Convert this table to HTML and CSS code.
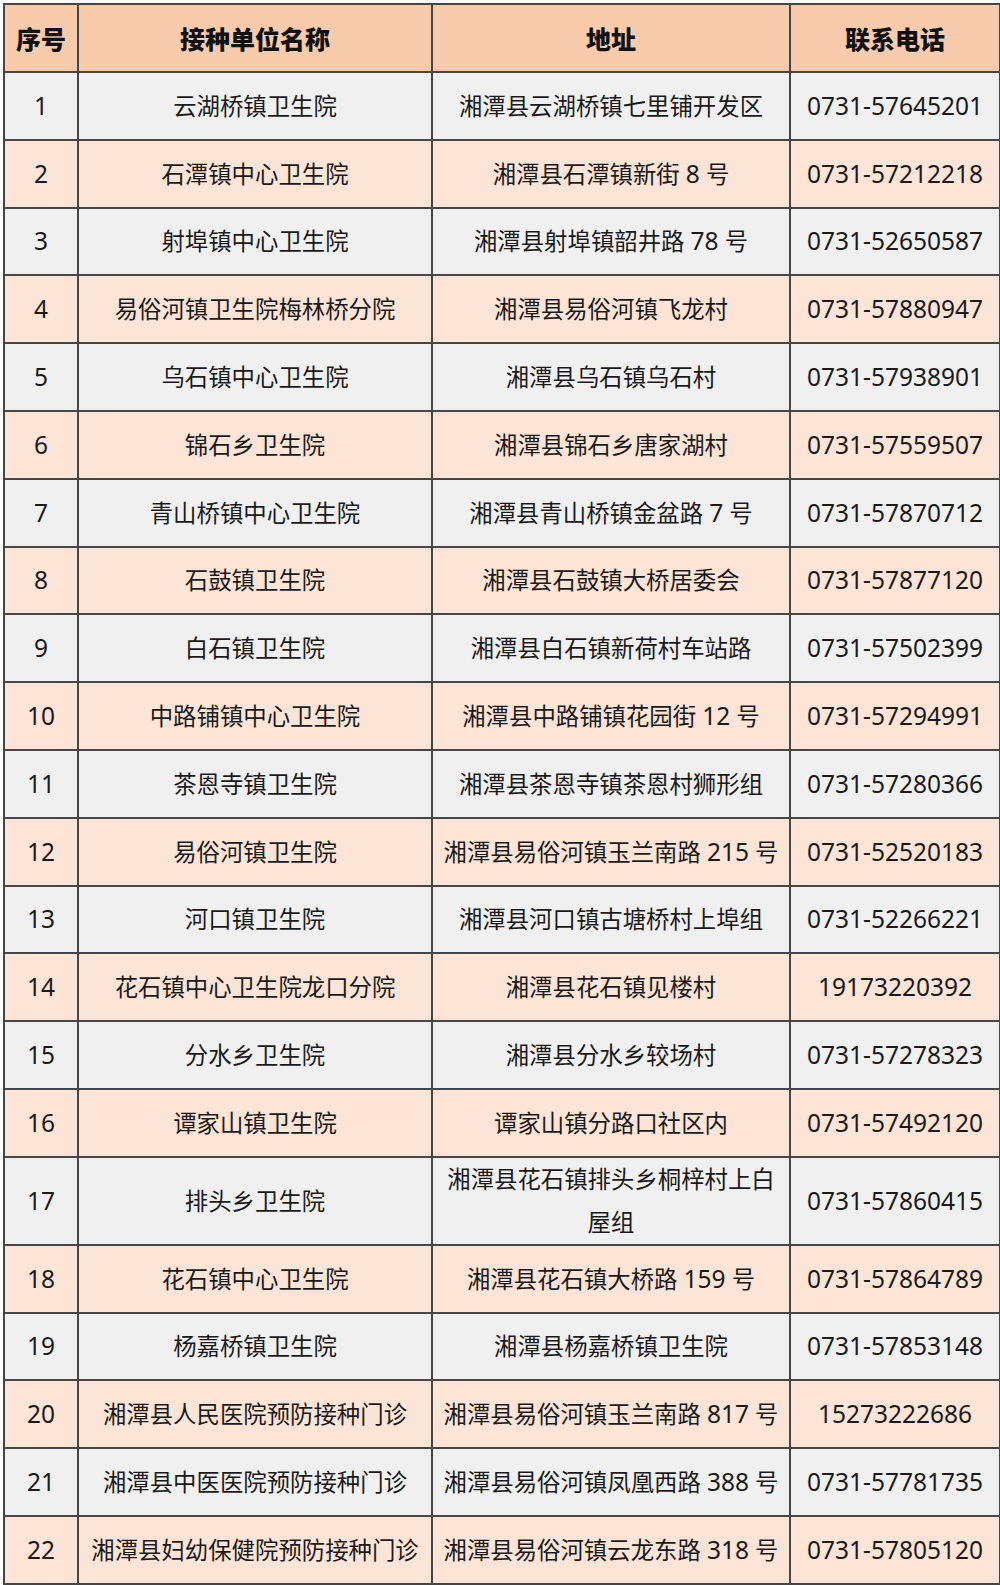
FILE: index.html
```html
<!DOCTYPE html>
<html lang="zh-CN">
<head>
<meta charset="utf-8">
<title>接种单位</title>
<link rel="stylesheet" href="styles.css">
</head>
<body>
<table class="sites">
  <colgroup>
    <col class="c-no">
    <col class="c-name">
    <col class="c-addr">
    <col class="c-tel">
  </colgroup>
  <thead>
    <tr><th>序号</th><th>接种单位名称</th><th>地址</th><th>联系电话</th></tr>
  </thead>
  <tbody>
    <tr><td class="num">1</td><td>云湖桥镇卫生院</td><td>湘潭县云湖桥镇七里铺开发区</td><td class="num">0731-57645201</td></tr>
    <tr><td class="num">2</td><td>石潭镇中心卫生院</td><td>湘潭县石潭镇新街 <span class="n">8</span> 号</td><td class="num">0731-57212218</td></tr>
    <tr><td class="num">3</td><td>射埠镇中心卫生院</td><td>湘潭县射埠镇韶井路 <span class="n">78</span> 号</td><td class="num">0731-52650587</td></tr>
    <tr><td class="num">4</td><td>易俗河镇卫生院梅林桥分院</td><td>湘潭县易俗河镇飞龙村</td><td class="num">0731-57880947</td></tr>
    <tr><td class="num">5</td><td>乌石镇中心卫生院</td><td>湘潭县乌石镇乌石村</td><td class="num">0731-57938901</td></tr>
    <tr><td class="num">6</td><td>锦石乡卫生院</td><td>湘潭县锦石乡唐家湖村</td><td class="num">0731-57559507</td></tr>
    <tr><td class="num">7</td><td>青山桥镇中心卫生院</td><td>湘潭县青山桥镇金盆路 <span class="n">7</span> 号</td><td class="num">0731-57870712</td></tr>
    <tr><td class="num">8</td><td>石鼓镇卫生院</td><td>湘潭县石鼓镇大桥居委会</td><td class="num">0731-57877120</td></tr>
    <tr><td class="num">9</td><td>白石镇卫生院</td><td>湘潭县白石镇新荷村车站路</td><td class="num">0731-57502399</td></tr>
    <tr><td class="num">10</td><td>中路铺镇中心卫生院</td><td>湘潭县中路铺镇花园街 <span class="n">12</span> 号</td><td class="num">0731-57294991</td></tr>
    <tr><td class="num">11</td><td>茶恩寺镇卫生院</td><td>湘潭县茶恩寺镇茶恩村狮形组</td><td class="num">0731-57280366</td></tr>
    <tr><td class="num">12</td><td>易俗河镇卫生院</td><td>湘潭县易俗河镇玉兰南路 <span class="n">215</span> 号</td><td class="num">0731-52520183</td></tr>
    <tr><td class="num">13</td><td>河口镇卫生院</td><td>湘潭县河口镇古塘桥村上埠组</td><td class="num">0731-52266221</td></tr>
    <tr><td class="num">14</td><td>花石镇中心卫生院龙口分院</td><td>湘潭县花石镇见楼村</td><td class="num">19173220392</td></tr>
    <tr><td class="num">15</td><td>分水乡卫生院</td><td>湘潭县分水乡较场村</td><td class="num">0731-57278323</td></tr>
    <tr><td class="num">16</td><td>谭家山镇卫生院</td><td>谭家山镇分路口社区内</td><td class="num">0731-57492120</td></tr>
    <tr class="tall"><td class="num">17</td><td>排头乡卫生院</td><td class="wrap">湘潭县花石镇排头乡桐梓村上白屋组</td><td class="num">0731-57860415</td></tr>
    <tr><td class="num">18</td><td>花石镇中心卫生院</td><td>湘潭县花石镇大桥路 <span class="n">159</span> 号</td><td class="num">0731-57864789</td></tr>
    <tr><td class="num">19</td><td>杨嘉桥镇卫生院</td><td>湘潭县杨嘉桥镇卫生院</td><td class="num">0731-57853148</td></tr>
    <tr><td class="num">20</td><td>湘潭县人民医院预防接种门诊</td><td>湘潭县易俗河镇玉兰南路 <span class="n">817</span> 号</td><td class="num">15273222686</td></tr>
    <tr><td class="num">21</td><td>湘潭县中医医院预防接种门诊</td><td>湘潭县易俗河镇凤凰西路 <span class="n">388</span> 号</td><td class="num">0731-57781735</td></tr>
    <tr><td class="num">22</td><td>湘潭县妇幼保健院预防接种门诊</td><td>湘潭县易俗河镇云龙东路 <span class="n">318</span> 号</td><td class="num">0731-57805120</td></tr>
  </tbody>
</table>
</body>
</html>
```

FILE: styles.css
```css
html, body {
  margin: 0;
  padding: 0;
  background: #ffffff;
}

body {
  padding: 3px 0 0 3px;
  font-family: "Noto Sans", "Noto Sans CJK SC", sans-serif;
  color: #1a1a1a;
}

.sites {
  border-collapse: collapse;
  table-layout: fixed;
  width: 996px;
  font-size: 23.4px;
}

.c-no { width: 74px; }
.c-name { width: 354px; }
.c-addr { width: 358px; }
.c-tel { width: 210px; }

.sites th,
.sites td {
  border: 2px solid #464646;
  padding: 0 8px;
  text-align: center;
  vertical-align: middle;
  white-space: nowrap;
  line-height: 32px;
}

.sites thead tr {
  height: 68px;
}

.sites th {
  background: #f8cbad;
  font-family: "Noto Sans CJK SC", sans-serif;
  font-size: 25px;
  font-weight: 900;
  color: #111111;
}

.sites tbody tr {
  height: 67.8px;
}

.sites tbody tr:nth-child(odd) td {
  background: #f0f0f0;
}

.sites tbody tr:nth-child(even) td {
  background: #fce4d6;
}

.sites td.num {
  font-size: 24.5px;
  padding: 0 4px;
}

.sites .n {
  font-size: 24.5px;
}

.sites td.wrap {
  white-space: normal;
  line-height: 43px;
}
```
